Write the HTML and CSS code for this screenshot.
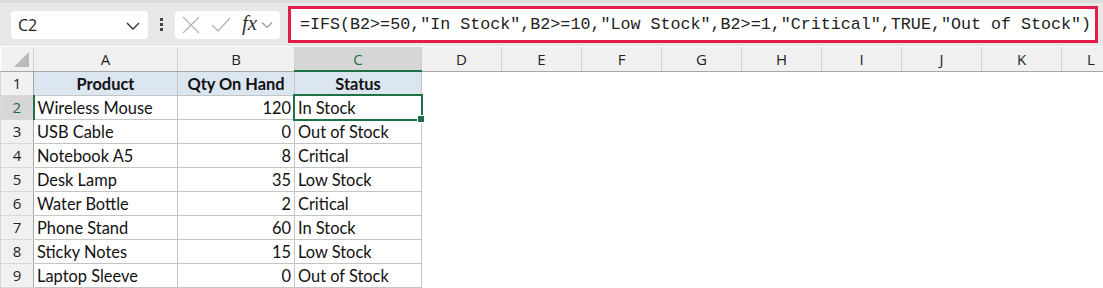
FILE: index.html
```html
<!DOCTYPE html>
<html lang="en">
<head>
  <meta charset="UTF-8" />
  <title>IFS stock status</title>
  <link rel="stylesheet" href="styles.css">
</head>
<body>
  <div class="toolbar">
    <div class="namebox">
      <span>C2</span>
      <svg class="chev" width="14" height="8" viewBox="0 0 14 8"><path d="M1 1 L7 7 L13 1" fill="none" stroke="#333" stroke-width="1.4"/></svg>
    </div>
    <div class="dots"><i></i><i></i><i></i></div>
    <div class="fxbox">
      <svg width="18" height="18" viewBox="0 0 18 18"><path d="M1 1 L17 17 M17 1 L1 17" stroke="#b5b5b5" stroke-width="1.3" fill="none"/></svg>
      <svg width="20" height="16" viewBox="0 0 20 16"><path d="M1 8 L7 14 L19 1" stroke="#b5b5b5" stroke-width="1.3" fill="none"/></svg>
      <span class="fx">fx</span>
      <svg width="12" height="8" viewBox="0 0 12 8"><path d="M1 1.5 L6 6.5 L11 1.5" fill="none" stroke="#999" stroke-width="1.2"/></svg>
    </div>
    <div class="formula">=IFS(B2&gt;=50,"In Stock",B2&gt;=10,"Low Stock",B2&gt;=1,"Critical",TRUE,"Out of Stock")</div>
  </div>

  <table class="sheet">
    <colgroup>
      <col class="c-row"><col class="c-a"><col class="c-b"><col class="c-c">
      <col class="c-n"><col class="c-n"><col class="c-n"><col class="c-n">
      <col class="c-n"><col class="c-n"><col class="c-n"><col class="c-n"><col class="c-l">
    </colgroup>
    <tr class="colhead">
      <th class="corner"><span class="tri"></span></th>
      <th>A</th><th>B</th><th class="sel">C</th><th>D</th><th>E</th><th>F</th><th>G</th><th>H</th><th>I</th><th>J</th><th>K</th><th class="last">L</th>
    </tr>
    <tr class="hdr">
      <th class="rn">1</th>
      <td>Product</td><td>Qty On Hand</td><td>Status</td><td class="e" colspan="9"></td>
    </tr>
    <tr>
      <th class="rn sel">2</th>
      <td>Wireless Mouse</td><td class="num">120</td><td class="active">In Stock</td><td class="e" colspan="9"></td>
    </tr>
    <tr>
      <th class="rn">3</th>
      <td>USB Cable</td><td class="num">0</td><td>Out of Stock</td><td class="e" colspan="9"></td>
    </tr>
    <tr>
      <th class="rn">4</th>
      <td>Notebook A5</td><td class="num">8</td><td>Critical</td><td class="e" colspan="9"></td>
    </tr>
    <tr>
      <th class="rn">5</th>
      <td>Desk Lamp</td><td class="num">35</td><td>Low Stock</td><td class="e" colspan="9"></td>
    </tr>
    <tr>
      <th class="rn">6</th>
      <td>Water Bottle</td><td class="num">2</td><td>Critical</td><td class="e" colspan="9"></td>
    </tr>
    <tr>
      <th class="rn">7</th>
      <td>Phone Stand</td><td class="num">60</td><td>In Stock</td><td class="e" colspan="9"></td>
    </tr>
    <tr>
      <th class="rn">8</th>
      <td>Sticky Notes</td><td class="num">15</td><td>Low Stock</td><td class="e" colspan="9"></td>
    </tr>
    <tr>
      <th class="rn">9</th>
      <td>Laptop Sleeve</td><td class="num">0</td><td>Out of Stock</td><td class="e" colspan="9"></td>
    </tr>
  </table>
</body>
</html>
```

FILE: styles.css
```css
body {
  margin: 0;
  background: #fff;
  font-family: "Open Sans", "Noto Sans", sans-serif;
  overflow: hidden;
}
.toolbar {
  height: 46px;
  background: #e8e8e8;
  border-top: 3px solid #dcdcdc;
  box-sizing: border-box;
  display: flex;
  align-items: center;
  padding: 0 5px 0 11px;
}
.namebox {
  width: 137px;
  height: 28px;
  background: #fff;
  border-radius: 4px;
  box-sizing: border-box;
  display: flex;
  align-items: center;
  justify-content: space-between;
  padding: 0 8px 0 7px;
  font-size: 16px;
  color: #222;
}
.chev { margin-top: 2px; }
.dots {
  width: 27px;
  display: flex;
  flex-direction: column;
  align-items: center;
  gap: 2px;
}
.dots i {
  width: 3px;
  height: 3px;
  background: #444;
}
.fxbox {
  width: 105px;
  height: 28px;
  background: #fff;
  border-radius: 4px;
  display: flex;
  align-items: center;
  gap: 11px;
  padding-left: 7px;
  box-sizing: border-box;
}
.fxbox .fx {
  font-family: "Liberation Serif", serif;
  font-style: italic;
  font-size: 21px;
  color: #333;
  margin-top: -3px;
  margin-right: -7px;
}
.formula {
  margin-left: 8px;
  flex: 1;
  height: 37px;
  box-sizing: border-box;
  border: 3px solid #e31c4c;
  background: #fff;
  font-family: "Liberation Mono", monospace;
  font-size: 16.7px;
  line-height: 31px;
  padding-left: 9px;
  color: #222;
  white-space: nowrap;
  overflow: hidden;
}
.sheet {
  border-collapse: collapse;
  table-layout: fixed;
  width: 1120px;
  margin-top: 1px;
}
.c-row { width: 33px; }
.c-a { width: 144px; }
.c-b { width: 117px; }
.c-c { width: 127px; }
.c-n { width: 80px; }
.c-l { width: 59px; }
.colhead th {
  height: 23px;
  padding: 0;
  background: #f0f0f0;
  font-weight: normal;
  font-size: 15px;
  color: #222;
  border-right: 1px solid #d0d0d0;
  border-bottom: 1px solid #a8a8a8;
  text-align: center;
}
.colhead th.sel {
  background: #d6d6d6;
  color: #1e6e42;
  border-bottom: 2px solid #1e7145;
}
.corner {
  position: relative;
}
.tri {
  position: absolute;
  right: 4px;
  bottom: 4px;
  width: 0;
  height: 0;
  border-left: 15px solid transparent;
  border-bottom: 15px solid #b9b9b9;
}
.sheet tr:not(.colhead) > * {
  height: 24px;
  box-sizing: border-box;
  padding: 0 3px;
  font-family: "Lato", "Open Sans", sans-serif;
  font-size: 16.4px;
  color: #111;
  border: 1px solid #c4c4c4;
  white-space: nowrap;
}
.sheet th.rn {
  background: #f0f0f0;
  font-family: "Open Sans", sans-serif;
  font-weight: normal;
  font-size: 15px;
  color: #222;
  text-align: center;
  border-color: #d8d8d8;
  border-right-color: #a8a8a8;
}
.sheet th.rn.sel {
  background: #d6d6d6;
  color: #1e6e42;
  border-right: 2px solid #1e7145;
}
.hdr td {
  background: #dce6f1;
  font-weight: bold;
  text-align: center;
}
.sheet td.num { text-align: right; }
.sheet td.e {
  border: none;
  background: #fff;
}
.active {
  position: relative;
}
.active::after {
  content: "";
  position: absolute;
  left: -2px;
  top: -2px;
  right: -2px;
  bottom: -2px;
  border: 2px solid #1e7145;
}
.active::before {
  content: "";
  position: absolute;
  right: -4px;
  bottom: -4px;
  width: 6px;
  height: 6px;
  background: #1e7145;
  border: 1px solid #fff;
  z-index: 1;
}
```
